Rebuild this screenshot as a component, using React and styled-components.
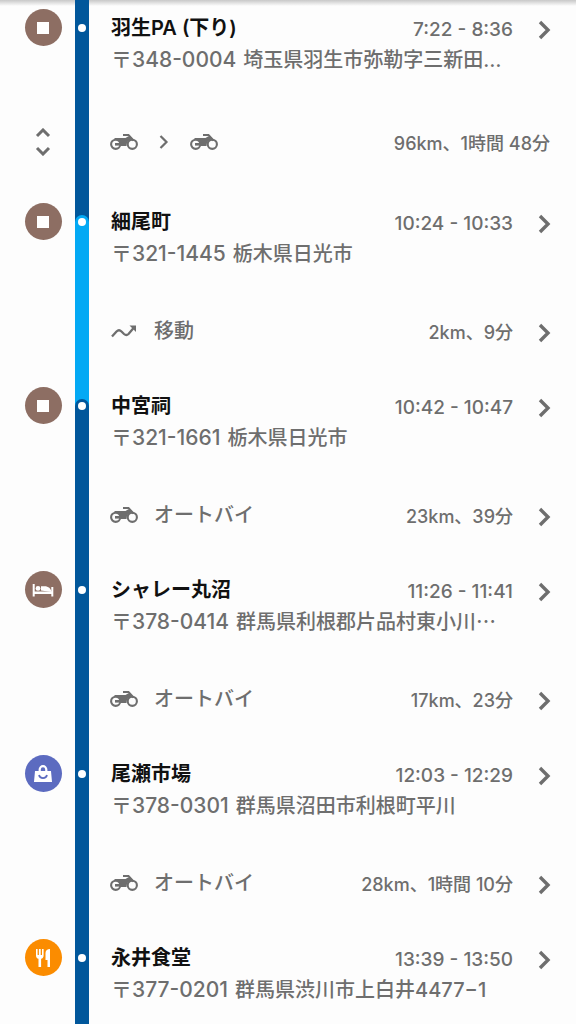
import React from 'react';
import styled, { createGlobalStyle } from 'styled-components';

const colors = {
    ride: '#01579b',
    move: '#03a9f4',
    stop: '#8d6e63',
    shop: '#5c6bc0',
    food: '#fb8c00',
    text: '#111111',
    sub: '#6e6e6e',
};

const GlobalStyle = createGlobalStyle`
    * {
        box-sizing: border-box;
    }
    body {
        margin: 0;
        background: #fdfdfd;
        font-family: Inter, "Noto Sans CJK JP", sans-serif;
    }
`;

// shadow cast by the header above the list
const Page = styled.main`
    min-height: 100vh;
    overflow: hidden;
    background: linear-gradient(#c8c8c8, #fdfdfd 6px);
`;

const List = styled.ol`
    list-style: none;
    margin: 0;
    padding: 0;
`;

const Row = styled.li`
    display: grid;
    grid-template-columns: 75px 14px minmax(0, 1fr);
    height: ${({ $height }) => $height}px;
`;

const IconCell = styled.div`
    display: flex;
    justify-content: center;
    align-items: ${({ $center }) => ($center ? 'center' : 'flex-start')};
    padding: ${({ $center }) => ($center ? '0' : '9px')} 0 0 11px;
`;

const Badge = styled.span`
    display: flex;
    align-items: center;
    justify-content: center;
    width: 37px;
    height: 37px;
    border-radius: 50%;
    background: ${({ $color }) => $color};
`;

const Rail = styled.div`
    background: ${({ $color }) => $color};
    padding-top: ${({ $place }) => ($place ? '21px' : '0')};
`;

const Segment = styled.div`
    display: flex;
    justify-content: center;
    height: 100%;
    padding-top: 3px;
    border-radius: 7px 7px 0 0;
    background: ${({ $color }) => $color};
`;

const Dot = styled.span`
    width: 8px;
    height: 8px;
    border-radius: 50%;
    background: white;
`;

const PlaceBody = styled.div`
    padding: 12px 20px 0 22px;
`;

const TravelBody = styled.div`
    display: flex;
    align-items: center;
    justify-content: space-between;
    padding: 0 ${({ $wide }) => ($wide ? '26px' : '20px')} 0 21px;
`;

const Line = styled.div`
    display: flex;
    align-items: center;
    justify-content: space-between;
`;

const Name = styled.h2`
    margin: 0;
    font-size: 20px;
    line-height: 32px;
    font-weight: 600;
    color: ${colors.text};
`;

const Address = styled.p`
    display: flex;
    align-items: baseline;
    gap: 7px;
    margin: 0;
    font-size: 20px;
    line-height: 32px;
    font-weight: 500;
    white-space: nowrap;
    color: ${colors.sub};
`;

const PostalCode = styled.span`
    font-size: 21px;
`;

const Side = styled.div`
    display: flex;
    align-items: center;
    gap: 20px;
    padding-top: 3px;
`;

const Detail = styled.span`
    font-size: 18px;
    line-height: 28px;
    font-weight: 500;
    white-space: nowrap;
    color: ${colors.sub};
`;

const Time = styled(Detail)`
    font-size: 19px;
`;

const Mode = styled.div`
    display: flex;
    align-items: center;
    gap: ${({ $wide }) => ($wide ? '20px' : '16px')};
    font-size: 20px;
    line-height: 32px;
    font-weight: 500;
    color: ${colors.sub};
`;

const IconButton = styled.button`
    display: flex;
    padding: 0;
    border: 0;
    background: none;
    color: ${colors.sub};
    cursor: pointer;
`;

const Chevron = ({ label }) => (
    <IconButton aria-label={label}>
        <svg width="23" height="22" viewBox="0 0 23 22" fill="none" stroke="currentColor" strokeWidth="3.4">
            <path d="M7 3l8 8-8 8" />
        </svg>
    </IconButton>
);

const SmallChevron = () => (
    <svg width="12" height="16" viewBox="0 0 12 16" fill="none" stroke="currentColor" strokeWidth="2.2">
        <path d="M2.5 2l6 6-6 6" />
    </svg>
);

const ExpandIcon = () => (
    <svg width="16" height="28" viewBox="0 0 16 28" fill="none" stroke="currentColor" strokeWidth="3">
        <path d="M2 8l6-6 6 6M2 20l6 6 6-6" />
    </svg>
);

const BikeIcon = () => (
    <svg width="28" height="18" viewBox="0 0 28 18" fill="none" stroke="currentColor">
        <circle cx="5.7" cy="11.3" r="4.6" strokeWidth="2.1" />
        <circle cx="22.3" cy="11.3" r="4.6" strokeWidth="2.1" />
        <path d="M13 2h5.500l5 5.500" strokeWidth="2" />
        <path d="M4.500 5h11l2.500-1.500h2.500l1.500 2.700c-3.500.8-5.500 3.200-5.500 6.800h-5.500c.4-4-2.500-6.500-6.500-6.500z" fill="currentColor" stroke="none" />
        <path d="M5 11.300h8" strokeWidth="2.600" />
    </svg>
);

const MoveIcon = () => (
    <svg width="28" height="18" viewBox="0 0 28 18" fill="none" stroke="currentColor">
        <path d="M2 14.500l4.500-5c1.500-1.500 3.500-1.500 5 0l2.500 2.500c1.500 1.300 3.200 1.300 4.500 0l5.500-6.500" strokeWidth="2.300" />
        <path d="M19.500 3.500h6.500v6.500z" fill="currentColor" stroke="none" />
    </svg>
);

const StopIcon = () => (
    <svg width="12" height="12" viewBox="0 0 12 12" fill="white">
        <path d="M0 0h12v12H0z" />
    </svg>
);

const BedIcon = () => (
    <svg width="22" height="16" viewBox="0 0 22 16" fill="white">
        <path d="M.7 2h2v7.500h16.600V5h2v9.500h-2V12H2.700v2.500h-2z" />
        <circle cx="6" cy="6.400" r="2.400" />
        <path d="M9 4.200h3.500c4 0 6.500 2.300 7 5.800L9 8.500z" />
    </svg>
);

const BagIcon = () => (
    <svg width="20" height="20" viewBox="0 0 20 20">
        <path d="M2 7h16l1 11H1z" fill="white" />
        <path d="M6.700 8V5.500a3.300 3.300 0 0 1 6.600 0V8" fill="none" stroke="white" strokeWidth="2.200" />
        <path d="M6 11c1 4.200 7 4.200 8 0" fill="none" stroke={colors.shop} strokeWidth="1.700" />
    </svg>
);

const FoodIcon = () => (
    <svg width="18" height="20" viewBox="0 0 18 20" fill="white">
        <path d="M2 1h1.600v6h1.300V1h1.800v6H8V1h1.600v6.500c0 1.800-1 3-2.500 3.300V19H4.500v-8.200C3 10.500 2 9.300 2 7.500z" />
        <path d="M16 1v18h-2.500v-7h-2V5c0-2.500 2-4 4.500-4z" />
    </svg>
);

const badges = {
    stop: { color: colors.stop, Icon: StopIcon },
    bed: { color: colors.stop, Icon: BedIcon },
    shop: { color: colors.shop, Icon: BagIcon },
    food: { color: colors.food, Icon: FoodIcon },
};

const timeline = [
    { kind: 'stop', name: '羽生PA (下り)', code: '〒348-0004', area: '埼玉県羽生市弥勒字三新田…', time: '7:22 - 8:36', travel: 'multi', detail: '96km、1時間 48分' },
    { kind: 'stop', name: '細尾町', code: '〒321-1445', area: '栃木県日光市', time: '10:24 - 10:33', travel: 'move', detail: '2km、9分' },
    { kind: 'stop', name: '中宮祠', code: '〒321-1661', area: '栃木県日光市', time: '10:42 - 10:47', travel: 'ride', detail: '23km、39分' },
    { kind: 'bed', name: 'シャレー丸沼', code: '〒378-0414', area: '群馬県利根郡片品村東小川⋯', time: '11:26 - 11:41', travel: 'ride', detail: '17km、23分' },
    { kind: 'shop', name: '尾瀬市場', code: '〒378-0301', area: '群馬県沼田市利根町平川', time: '12:03 - 12:29', travel: 'ride', detail: '28km、1時間 10分' },
    { kind: 'food', name: '永井食堂', code: '〒377-0201', area: '群馬県渋川市上白井4477−1', time: '13:39 - 13:50', travel: null },
];

const railColor = (travel) => (travel === 'move' ? colors.move : colors.ride);

const Place = ({ item, before }) => {
    const { color, Icon } = badges[item.kind];
    return (
        <Row $height={item.travel ? 90 : 94}>
            <IconCell>
                <Badge $color={color}><Icon /></Badge>
            </IconCell>
            <Rail $place $color={before}>
                <Segment $color={railColor(item.travel)}><Dot /></Segment>
            </Rail>
            <PlaceBody>
                <Line>
                    <Name>{item.name}</Name>
                    <Side>
                        <Time>{item.time}</Time>
                        <Chevron label={item.name} />
                    </Side>
                </Line>
                <Address>
                    <PostalCode>{item.code}</PostalCode>
                    <span>{item.area}</span>
                </Address>
            </PlaceBody>
        </Row>
    );
};

const Travel = ({ item }) => {
    const multi = item.travel === 'multi';
    return (
        <Row $height={multi ? 104 : 94}>
            <IconCell $center>
                {multi && <IconButton aria-label="展開"><ExpandIcon /></IconButton>}
            </IconCell>
            <Rail $color={railColor(item.travel)} />
            <TravelBody $wide={multi}>
                {multi ? (
                    <Mode $wide><BikeIcon /><SmallChevron /><BikeIcon /></Mode>
                ) : (
                    <Mode>
                        {item.travel === 'move' ? <MoveIcon /> : <BikeIcon />}
                        <span>{item.travel === 'move' ? '移動' : 'オートバイ'}</span>
                    </Mode>
                )}
                <Side>
                    <Detail>{item.detail}</Detail>
                    {!multi && <Chevron label={item.detail} />}
                </Side>
            </TravelBody>
        </Row>
    );
};

const App = () => (
    <Page>
        <GlobalStyle />
        <List>
            {timeline.map((item, i) => (
                <React.Fragment key={item.name}>
                    <Place item={item} before={railColor(i > 0 ? timeline[i - 1].travel : null)} />
                    {item.travel && <Travel item={item} />}
                </React.Fragment>
            ))}
        </List>
    </Page>
);

export default App;
